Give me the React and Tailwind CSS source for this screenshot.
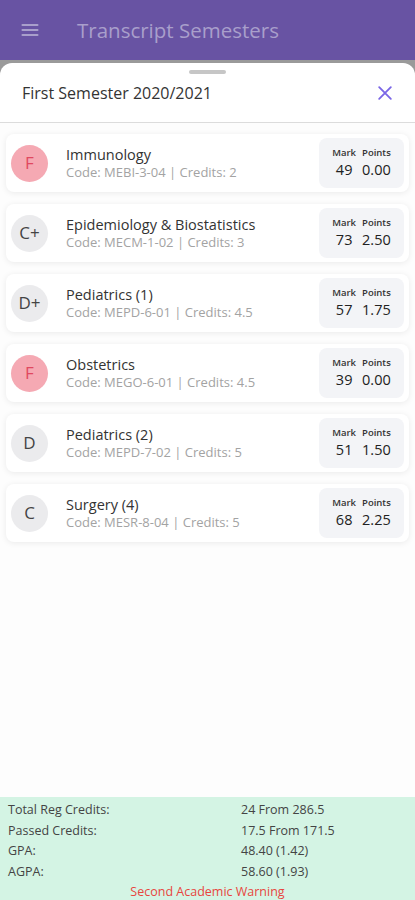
import React from 'react';

const courses = [
    { grade: 'F', name: 'Immunology', code: 'MEBI-3-04', credits: '2', mark: '49', points: '0.00', fail: true },
    { grade: 'C+', name: 'Epidemiology & Biostatistics', code: 'MECM-1-02', credits: '3', mark: '73', points: '2.50' },
    { grade: 'D+', name: 'Pediatrics (1)', code: 'MEPD-6-01', credits: '4.5', mark: '57', points: '1.75' },
    { grade: 'F', name: 'Obstetrics', code: 'MEGO-6-01', credits: '4.5', mark: '39', points: '0.00', fail: true },
    { grade: 'D', name: 'Pediatrics (2)', code: 'MEPD-7-02', credits: '5', mark: '51', points: '1.50' },
    { grade: 'C', name: 'Surgery (4)', code: 'MESR-8-04', credits: '5', mark: '68', points: '2.25' },
];

const summary = [
    ['Total Reg Credits:', '24 From 286.5'],
    ['Passed Credits:', '17.5 From 171.5'],
    ['GPA:', '48.40 (1.42)'],
    ['AGPA:', '58.60 (1.93)'],
];

function CourseCard({ course }) {
    return (
        <div className="h-[58px] mx-[6px] rounded-lg bg-white shadow-[0_1px_6px_rgba(0,0,0,0.08)] flex items-center pl-[5px] pr-[5px]">
            <div
                className={`w-[37px] h-[37px] rounded-full flex items-center justify-center text-[17px] shrink-0 ${
                    course.fail ? 'bg-[#f5a9b3] text-[#e04860]' : 'bg-[#ebebed] text-[#444]'
                }`}
            >
                {course.grade}
            </div>
            <div className="flex-1 min-w-0 ml-[18px] flex flex-col">
                <span className="text-[14.5px] leading-[19px] text-[#333] truncate">{course.name}</span>
                <span className="text-[13px] leading-[17px] text-[#a3a3a3] truncate">
                    Code: {course.code} | Credits: {course.credits}
                </span>
            </div>
            <div className="w-[85px] h-[50px] rounded-lg bg-[#f3f4f7] flex justify-center gap-[6px] pt-[8px] shrink-0">
                <div className="flex flex-col items-center">
                    <span className="text-[9.5px] leading-[13px] font-semibold text-[#333]">Mark</span>
                    <span className="text-[14.5px] leading-[22px] text-[#222]">{course.mark}</span>
                </div>
                <div className="flex flex-col items-center">
                    <span className="text-[9.5px] leading-[13px] font-semibold text-[#333]">Points</span>
                    <span className="text-[14.5px] leading-[22px] text-[#222]">{course.points}</span>
                </div>
            </div>
        </div>
    );
}

export default function App() {
    return (
        <div className="w-full h-[900px] flex flex-col bg-[#9a9a9a] overflow-hidden" style={{ fontFamily: '"Open Sans", "Noto Sans", sans-serif' }}>
            {/* Dimmed app bar */}
            <div className="h-[60px] bg-[#6853a3] flex items-center px-5 shrink-0">
                <svg className="w-[20px] h-[20px]" viewBox="0 0 24 24" fill="none" stroke="#a99fcb" strokeWidth="2.5" strokeLinecap="round">
                    <path d="M3 6h18M3 12h18M3 18h18" />
                </svg>
                <span className="ml-[37px] text-[20.5px] text-[#a99fcb]">Transcript Semesters</span>
            </div>

            {/* Bottom sheet */}
            <div className="mt-[3px] flex-1 flex flex-col bg-white rounded-t-[12px] min-h-0">
                <div className="flex justify-center pt-[7px]">
                    <div className="w-[37px] h-[4px] rounded-full bg-[#c6c6c6]" />
                </div>
                <div className="h-[49px] pb-[10px] flex items-center justify-between pl-[22px] pr-[20px] border-b border-[#dcdcdc] shadow-[0_2px_3px_rgba(0,0,0,0.05)]">
                    <span className="text-[16px] text-[#333]">First Semester 2020/2021</span>
                    <svg className="w-[20px] h-[20px]" viewBox="0 0 24 24" fill="none" stroke="#7a66e6" strokeWidth="2.2" strokeLinecap="round">
                        <path d="M5 5l14 14M19 5L5 19" />
                    </svg>
                </div>

                <div className="flex-1 flex flex-col gap-[12px] pt-[11px] bg-[#fdfdfd]">
                    {courses.map(course => (
                        <CourseCard key={course.code} course={course} />
                    ))}
                </div>

                {/* Summary footer */}
                <div className="h-[103px] bg-[#d4f4e4] pt-[3px] px-[8px] text-[12.5px] leading-[20.5px] text-[#444] shrink-0">
                    {summary.map(([label, value]) => (
                        <div key={label} className="flex">
                            <span className="w-[233px]">{label}</span>
                            <span>{value}</span>
                        </div>
                    ))}
                    <div className="text-center text-[#e8453e]">Second Academic Warning</div>
                </div>
            </div>
        </div>
    );
}
